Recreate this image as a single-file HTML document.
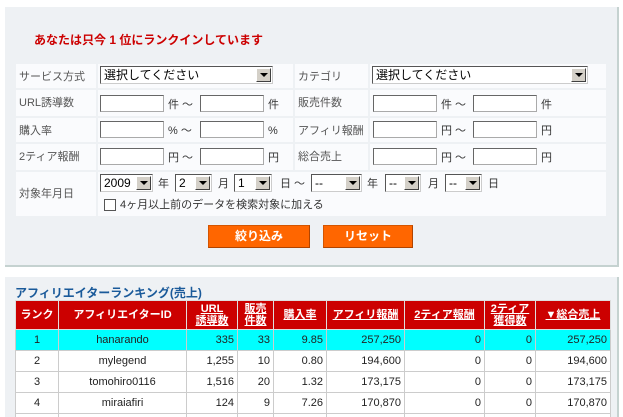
<!DOCTYPE html>
<html><head><meta charset="utf-8"><style>
*{margin:0;padding:0;box-sizing:border-box}
html,body{width:623px;height:417px;overflow:hidden}
body{background:#fff;font-family:"Liberation Sans","Noto Sans CJK JP",sans-serif;font-size:12px;color:#333;position:relative}
.a{position:absolute}
.panel{background:#eef1f4;border-right:2px solid #c5d2d0;border-bottom:2px solid #c5d2d0}
.cell{position:absolute;background:#fafbfd;border:1px solid #eef1f4}
.lbl{color:#555;font-size:11px;line-height:26px;padding-left:3px;white-space:nowrap}
.inp{position:absolute;height:17px;background:#fff;border:1px solid #aaa;border-top-color:#666;border-left-color:#666;width:64px}
.sel{position:absolute;height:18px;background:#fff;border:1px solid;border-color:#555 #ccc #ccc #555;font-size:12px;line-height:16px;padding-left:3px;color:#000}
.sel i{position:absolute;right:1px;top:1px;width:15px;height:14px;background:#d4d0c8;border:1px solid;border-color:#fff #404040 #404040 #fff}
.sel i:after{content:"";position:absolute;left:3px;top:4px;border-left:4px solid transparent;border-right:4px solid transparent;border-top:4px solid #000}
.t{position:absolute;font-size:11px;color:#333;line-height:16px;white-space:nowrap}
.btn{position:absolute;background:#ff6600;border:1px solid #d45500;border-right-color:#b04400;border-bottom-color:#b04400;color:#fff;font-weight:bold;font-size:12px;text-align:center;line-height:21px}
table{position:absolute;left:15px;top:300px;border-collapse:collapse;width:596px;table-layout:fixed}
td,th{border:1px solid #ccc;font-size:11px;height:21px;padding:0 3px;color:#222;overflow:hidden;white-space:nowrap}
th{background:#cc0000;color:#fff;font-size:11px;height:29px;line-height:12px;border-color:#ddd}
th u{color:#fff}
td{text-align:right}
td.c{text-align:center}
tr.h td{background:#00ffff}
</style></head><body>
<div class="a panel" style="left:5px;top:7px;width:614px;height:260px"></div>
<div class="a" style="left:34px;top:31px;color:#cc0000;font-weight:bold;font-size:12px">あなたは只今 1 位にランクインしています</div>

<div class="cell" style="left:15px;top:63px;width:82px;height:26px"><div class="lbl">サービス方式</div></div>
<div class="cell" style="left:97px;top:63px;width:197px;height:26px"></div>
<div class="cell" style="left:294px;top:63px;width:75px;height:26px"><div class="lbl">カテゴリ</div></div>
<div class="cell" style="left:369px;top:63px;width:238px;height:26px"></div>

<div class="cell" style="left:15px;top:89px;width:82px;height:28px"><div class="lbl">URL誘導数</div></div>
<div class="cell" style="left:97px;top:89px;width:197px;height:28px"></div>
<div class="cell" style="left:294px;top:89px;width:75px;height:28px"><div class="lbl">販売件数</div></div>
<div class="cell" style="left:369px;top:89px;width:238px;height:28px"></div>

<div class="cell" style="left:15px;top:117px;width:82px;height:26px"><div class="lbl">購入率</div></div>
<div class="cell" style="left:97px;top:117px;width:197px;height:26px"></div>
<div class="cell" style="left:294px;top:117px;width:75px;height:26px"><div class="lbl">アフィリ報酬</div></div>
<div class="cell" style="left:369px;top:117px;width:238px;height:26px"></div>

<div class="cell" style="left:15px;top:143px;width:82px;height:28px"><div class="lbl">2ティア報酬</div></div>
<div class="cell" style="left:97px;top:143px;width:197px;height:28px"></div>
<div class="cell" style="left:294px;top:143px;width:75px;height:28px"><div class="lbl">総合売上</div></div>
<div class="cell" style="left:369px;top:143px;width:238px;height:28px"></div>

<div class="cell" style="left:15px;top:171px;width:82px;height:46px"><div class="lbl" style="line-height:44px">対象年月日</div></div>
<div class="cell" style="left:97px;top:171px;width:510px;height:46px"></div>

<div class="sel" style="left:100px;top:66px;width:173px">選択してください<i></i></div>
<div class="sel" style="left:372px;top:66px;width:216px">選択してください<i></i></div>

<div class="inp" style="left:100px;top:95px"></div><div class="t" style="left:168px;top:97px">件 ～</div><div class="inp" style="left:200px;top:95px"></div><div class="t" style="left:268px;top:97px">件</div>
<div class="inp" style="left:373px;top:95px"></div><div class="t" style="left:441px;top:97px">件 ～</div><div class="inp" style="left:473px;top:95px"></div><div class="t" style="left:541px;top:97px">件</div>

<div class="inp" style="left:100px;top:121px"></div><div class="t" style="left:168px;top:123px">% ～</div><div class="inp" style="left:200px;top:121px"></div><div class="t" style="left:268px;top:123px">%</div>
<div class="inp" style="left:373px;top:121px"></div><div class="t" style="left:441px;top:123px">円 ～</div><div class="inp" style="left:473px;top:121px"></div><div class="t" style="left:541px;top:123px">円</div>

<div class="inp" style="left:100px;top:148px"></div><div class="t" style="left:168px;top:150px">円 ～</div><div class="inp" style="left:200px;top:148px"></div><div class="t" style="left:268px;top:150px">円</div>
<div class="inp" style="left:373px;top:148px"></div><div class="t" style="left:441px;top:150px">円 ～</div><div class="inp" style="left:473px;top:148px"></div><div class="t" style="left:541px;top:150px">円</div>

<div class="sel" style="left:100px;top:174px;width:53px">2009<i></i></div><div class="t" style="left:158px;top:176px">年</div>
<div class="sel" style="left:175px;top:174px;width:37px">2<i></i></div><div class="t" style="left:218px;top:176px">月</div>
<div class="sel" style="left:234px;top:174px;width:38px">1<i></i></div><div class="t" style="left:280px;top:176px">日 ～</div>
<div class="sel" style="left:311px;top:174px;width:51px">--<i></i></div><div class="t" style="left:367px;top:176px">年</div>
<div class="sel" style="left:385px;top:174px;width:36px">--<i></i></div><div class="t" style="left:428px;top:176px">月</div>
<div class="sel" style="left:445px;top:174px;width:37px">--<i></i></div><div class="t" style="left:488px;top:176px">日</div>
<div class="a" style="left:104px;top:199px;width:12px;height:12px;border:1px solid #555;background:#fff"></div>
<div class="t" style="left:120px;top:197px">4ヶ月以上前のデータを検索対象に加える</div>

<div class="btn" style="left:208px;top:225px;width:102px;height:23px">絞り込み</div>
<div class="btn" style="left:323px;top:225px;width:90px;height:23px">リセット</div>

<div class="a panel" style="left:5px;top:277px;width:614px;height:140px;border-bottom:none"></div>
<div class="a" style="left:15px;top:284px;color:#1a5a9a;font-weight:bold;font-size:12px">アフィリエイターランキング(売上)</div>
<table>
<colgroup><col style="width:43px"><col style="width:128px"><col style="width:51px"><col style="width:36px"><col style="width:53px"><col style="width:78px"><col style="width:80px"><col style="width:51px"><col></colgroup>
<tr><th>ランク</th><th>アフィリエイターID</th><th><u>URL<br>誘導数</u></th><th><u>販売<br>件数</u></th><th><u>購入率</u></th><th><u>アフィリ報酬</u></th><th><u>2ティア報酬</u></th><th><u>2ティア<br>獲得数</u></th><th><u>▼総合売上</u></th></tr>
<tr class="h"><td class="c">1</td><td class="c">hanarando</td><td>335</td><td>33</td><td>9.85</td><td>257,250</td><td>0</td><td>0</td><td>257,250</td></tr>
<tr style="background:#fff"><td class="c">2</td><td class="c">mylegend</td><td>1,255</td><td>10</td><td>0.80</td><td>194,600</td><td>0</td><td>0</td><td>194,600</td></tr>
<tr style="background:#fff"><td class="c">3</td><td class="c">tomohiro0116</td><td>1,516</td><td>20</td><td>1.32</td><td>173,175</td><td>0</td><td>0</td><td>173,175</td></tr>
<tr style="background:#fff"><td class="c">4</td><td class="c">miraiafiri</td><td>124</td><td>9</td><td>7.26</td><td>170,870</td><td>0</td><td>0</td><td>170,870</td></tr>
<tr style="background:#fff"><td class="c">&nbsp;</td><td></td><td></td><td></td><td></td><td></td><td></td><td></td><td></td></tr>
</table>
</body></html>
